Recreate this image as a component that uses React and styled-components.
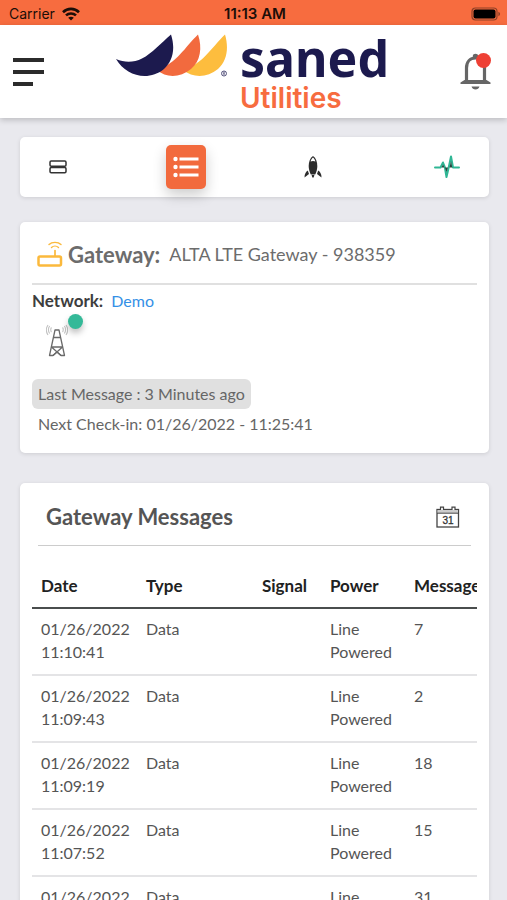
import React from "react";
import styled, { createGlobalStyle } from "styled-components";

const messages = [
  { date: "01/26/2022", time: "11:10:41", type: "Data", power: "Line Powered", count: 7 },
  { date: "01/26/2022", time: "11:09:43", type: "Data", power: "Line Powered", count: 2 },
  { date: "01/26/2022", time: "11:09:19", type: "Data", power: "Line Powered", count: 18 },
  { date: "01/26/2022", time: "11:07:52", type: "Data", power: "Line Powered", count: 15 },
  { date: "01/26/2022", time: "11:06:24", type: "Data", power: "Line Powered", count: 31 },
];

const WifiIcon = () => (
  <svg width="18" height="14" viewBox="0 0 18 14" fill="none" stroke="#1c0e08" strokeWidth="2.6">
    <path d="M1 5.2C5.5 0.8 12.5 0.8 17 5.2" />
    <path d="M4 8.4C6.8 5.8 11.2 5.8 14 8.4" />
    <path d="M9 13.6L6.2 10.8C7.8 9.3 10.2 9.3 11.8 10.8Z" fill="#1c0e08" stroke="none" />
  </svg>
);

const BatteryIcon = () => (
  <svg width="30" height="14" viewBox="0 0 30 14">
    <rect x="1" y="1" width="25" height="12" rx="3.5" fill="none" stroke="#8f4127" strokeWidth="1.2" />
    <rect x="2.5" y="2.5" width="22" height="9" rx="2" fill="#000" />
    <path d="M27.4 4.8C29.6 5.6 29.6 8.4 27.4 9.2Z" fill="#8f4127" />
  </svg>
);

const MenuIcon = () => (
  <svg width="32" height="28" viewBox="0 0 32 28" fill="#2b2b2b">
    <rect x="0" y="0" width="31" height="4" />
    <rect x="0" y="12" width="31" height="4" />
    <rect x="0" y="24" width="20" height="4" />
  </svg>
);

const LogoMark = () => (
  <svg width="112" height="44" viewBox="0 0 112 44">
    <path d="M109 0.500C113 14 111 27 102 35C91 44 77 44 67 36C87 30 95 14 109 0.500Z" fill="#fdbd3e" />
    <path d="M82 0.500C86.500 14 84.500 27 75 35C64 44 50 44 41 36C61 29 69 13 82 0.500Z" fill="#f26a3e" />
    <path d="M55 0.500C60 16 56 28 48 35C32 48 10 42 0 25C9 29 18 28.500 26 24.500C36 19.500 45 9 55 0.500Z" fill="#1c1a4e" />
    <circle cx="108" cy="39.500" r="2.500" fill="none" stroke="#55537c" strokeWidth="1" />
    <path d="M107.300 41V38.200H108.700V39.500H107.300M108.100 39.500L108.900 41" fill="none" stroke="#55537c" strokeWidth="0.600" />
  </svg>
);

const BellIcon = () => (
  <svg width="32" height="38" viewBox="0 0 32 38">
    <path
      d="M6.500 28V15C6.500 9 10 5 15.500 5C21 5 24.500 9 24.500 15V28"
      fill="none"
      stroke="#666"
      strokeWidth="3.200"
    />
    <path d="M12.800 5V3C12.800 0 18.200 0 18.200 3V5Z" fill="#666" />
    <path d="M0.500 31V29.500L4.500 27H26.500L30.500 29.500V31Z" fill="#666" />
    <path d="M11.500 33.500H19.500C18.500 37.500 12.500 37.500 11.500 33.500Z" fill="#666" />
  </svg>
);

const StackIcon = () => (
  <svg width="18" height="14" viewBox="0 0 18 14" fill="none" stroke="#333" strokeWidth="1.500">
    <rect x="1" y="1" width="16" height="5.200" rx="1.200" />
    <rect x="1" y="7.600" width="16" height="5.200" rx="1.200" />
  </svg>
);

const ListIcon = () => (
  <svg width="26" height="22" viewBox="0 0 26 22" fill="#fff">
    <circle cx="2.500" cy="3" r="2.200" />
    <circle cx="2.500" cy="11" r="2.200" />
    <circle cx="2.500" cy="19" r="2.200" />
    <rect x="6.500" y="1.500" width="19" height="3" />
    <rect x="6.500" y="9.500" width="19" height="3" />
    <rect x="6.500" y="17.500" width="19" height="3" />
  </svg>
);

const RocketIcon = () => (
  <svg width="18" height="22" viewBox="0 0 18 22" fill="#2c2c2c">
    <path d="M9 0C12 2 13.300 6 13.300 10C13.300 13 12.500 16 11.200 18.500H6.800C5.500 16 4.700 13 4.700 10C4.700 6 6 2 9 0Z" />
    <path d="M6.600 5.500C7 3.800 7.900 2.500 9 1.600C10.100 2.500 11 3.800 11.400 5.500C10 4.700 8 4.700 6.600 5.500Z" fill="#fff" />
    <path d="M3.800 14.500L5 18L0.500 21.500C0.500 18.500 1.500 16 3.800 14.500Z" />
    <path d="M14.200 14.500L13 18L17.500 21.500C17.500 18.500 16.500 16 14.200 14.500Z" />
    <path d="M7.600 19H10.400L9.700 21.500H8.300Z" />
  </svg>
);

const PulseIcon = () => (
  <svg width="26" height="24" viewBox="0 0 26 24" fill="none" strokeLinejoin="round" strokeLinecap="round">
    <path
      d="M1 12.500H6.500L9 7.500L10.800 12L12.500 22L14.800 12L17 1.500L19 12.500H25"
      stroke="#2fb694"
      strokeWidth="2"
    />
    <path d="M7.500 12.500L9 9.500L10.500 12.500ZM11 12.500L12.500 17L14 12.500ZM15.500 12.500L17 6L18.300 12.500Z" fill="#24443d" />
  </svg>
);

const RouterIcon = () => (
  <svg width="26" height="26" viewBox="0 0 26 26" fill="none" stroke="#fbb93c" strokeLinecap="round">
    <rect x="1.500" y="15.500" width="22.500" height="9" rx="1.500" strokeWidth="2.500" />
    <path d="M18 15V9.500" strokeWidth="1.700" />
    <path d="M12 3.500C15 0.600 21 0.600 24 3.500" strokeWidth="1.400" />
    <path d="M14.500 6.500C16.500 4.600 19.500 4.600 21.500 6.500" strokeWidth="1.400" />
  </svg>
);

const TowerIcon = () => (
  <svg width="22" height="34" viewBox="0 0 22 34" fill="none" stroke="#6a6a6a" strokeWidth="1.300">
    <path d="M9 7H13L18.500 32.500H15L11 29L7 32.500H3.500Z" strokeLinejoin="round" />
    <path d="M7.500 14.500H14.500M5.500 24L15 32.500M16.500 24L7 32.500M6 24H16" />
    <g stroke="#c2c2c2" strokeWidth="1.100">
      <path d="M5.500 4.500C4.500 5.500 4.500 8 5.500 9M3.700 3C2 5 2 8.500 3.700 10.500M2 2C0 5 0 9 2 12" />
      <path d="M16.500 4.500C17.500 5.500 17.500 8 16.500 9M18.300 3C20 5 20 8.500 18.300 10.500M20 2C22 5 22 9 20 12" />
    </g>
  </svg>
);

const CalendarIcon = () => (
  <svg width="24" height="22" viewBox="0 0 24 22">
    <rect x="1" y="3.500" width="21.500" height="17.500" fill="#fff" stroke="#444" strokeWidth="1.300" />
    <rect x="1.600" y="4" width="20.300" height="3" fill="#ccc" />
    <path d="M1 7.200H22.500" stroke="#444" />
    <path d="M4.500 4V1.200H7.500V4M16 4V1.200H19V4" fill="#fff" stroke="#444" strokeWidth="1.200" />
    <text x="12" y="17.500" textAnchor="middle" fontFamily="Liberation Sans, sans-serif" fontSize="10" fill="#333" stroke="#333" strokeWidth="0.300">
      31
    </text>
  </svg>
);

const App = () => {
  return (
    <>
      <GlobalStyle />
      <StatusBar>
        <Carrier>
          Carrier <WifiIcon />
        </Carrier>
        <Clock>11:13 AM</Clock>
        <Battery>
          <BatteryIcon />
        </Battery>
      </StatusBar>

      <Header>
        <IconButton aria-label="Menu">
          <MenuIcon />
        </IconButton>
        <Logo>
          <LogoMark />
          <div>
            <Brand>saned</Brand>
            <SubBrand>Utilities</SubBrand>
          </div>
        </Logo>
        <IconButton aria-label="Notifications">
          <BellIcon />
          <AlertDot />
        </IconButton>
      </Header>

      <Main>
        <TabBar>
          <Tab aria-label="Overview">
            <StackIcon />
          </Tab>
          <Tab aria-label="Messages" $active>
            <ListIcon />
          </Tab>
          <Tab aria-label="Actions">
            <RocketIcon />
          </Tab>
          <Tab aria-label="Activity" $wide>
            <PulseIcon />
          </Tab>
        </TabBar>

        <GatewayCard>
          <GatewayTitle>
            <RouterIcon />
            <h1>Gateway:</h1>
            <span>ALTA LTE Gateway - 938359</span>
          </GatewayTitle>
          <Network>
            <strong>Network:</strong>
            <a href="#demo">Demo</a>
          </Network>
          <Signal>
            <TowerIcon />
            <OnlineDot />
          </Signal>
          <LastMessage>Last Message : 3 Minutes ago</LastMessage>
          <NextCheckIn>Next Check-in: 01/26/2022 - 11:25:41</NextCheckIn>
        </GatewayCard>

        <MessagesCard>
          <MessagesTitle>
            <h2>Gateway Messages</h2>
            <IconButton aria-label="Pick a date">
              <CalendarIcon />
            </IconButton>
          </MessagesTitle>
          <TableScroll>
            <Table>
              <colgroup>
                <Col $width={105} />
                <Col $width={116} />
                <Col $width={68} />
                <Col $width={84} />
                <Col $width={120} />
              </colgroup>
              <thead>
                <tr>
                  <th>Date</th>
                  <th>Type</th>
                  <th>Signal</th>
                  <th>Power</th>
                  <th>Message</th>
                </tr>
              </thead>
              <tbody>
                {messages.map((item) => (
                  <tr key={item.time}>
                    <td>
                      {item.date} {item.time}
                    </td>
                    <td>{item.type}</td>
                    <td></td>
                    <td>{item.power}</td>
                    <td>{item.count}</td>
                  </tr>
                ))}
              </tbody>
            </Table>
          </TableScroll>
        </MessagesCard>
      </Main>
    </>
  );
};

export default App;

const GlobalStyle = createGlobalStyle`
  * {
    box-sizing: border-box;
  }
  html {
    scrollbar-width: none;
  }
  body {
    margin: 0;
    background: #e9e9ee;
    color: #555;
    font-family: Lato, sans-serif;
    font-size: 16px;
    line-height: 23px;
  }
  h1, h2, p {
    margin: 0;
  }
  svg {
    display: block;
    flex: none;
  }
`;

const StatusBar = styled.div`
  display: grid;
  grid-template-columns: 1fr auto 1fr;
  align-items: center;
  height: 25px;
  padding: 2px 6px 0 9px;
  background: #f76c3f;
  color: #1c0e08;
  font-family: Inter, sans-serif;
  font-size: 14px;
`;

const Carrier = styled.div`
  display: flex;
  align-items: center;
  gap: 7px;
`;

const Clock = styled.div`
  font-size: 15px;
  font-weight: 600;
`;

const Battery = styled.div`
  justify-self: end;
`;

const Header = styled.header`
  position: relative;
  display: flex;
  align-items: center;
  justify-content: space-between;
  height: 93px;
  padding: 0 15px 0 13px;
  background: #fff;
  box-shadow: 0 2px 6px rgba(0, 0, 0, 0.2);
`;

const IconButton = styled.button`
  position: relative;
  padding: 0;
  border: 0;
  background: none;
  cursor: pointer;
`;

const AlertDot = styled.span`
  position: absolute;
  top: 0;
  right: 1px;
  width: 15px;
  height: 15px;
  border-radius: 50%;
  background: #ee4035;
`;

const Logo = styled.div`
  display: flex;
  align-items: flex-start;
  gap: 12px;
  height: 76px;
`;

const Brand = styled.div`
  color: #1c1a4e;
  font-family: "Noto Sans", sans-serif;
  font-size: 50px;
  font-weight: 700;
  line-height: 48px;
`;

const SubBrand = styled.div`
  color: #f76c3f;
  font-family: Inter, sans-serif;
  font-size: 28px;
  font-weight: 600;
  line-height: 32px;
`;

const Main = styled.main`
  padding: 19px 18px 30px 20px;
`;

const Card = styled.section`
  border-radius: 5px;
  background: #fff;
  box-shadow: 0 1px 4px rgba(0, 0, 0, 0.12);
`;

const TabBar = styled.nav`
  display: flex;
  align-items: center;
  justify-content: space-between;
  height: 60px;
  margin-bottom: 25px;
  padding: 0 16px 0 18px;
  border-radius: 5px;
  background: #fff;
  box-shadow: 0 1px 4px rgba(0, 0, 0, 0.12);
`;

const Tab = styled.button`
  display: flex;
  align-items: center;
  justify-content: center;
  width: ${({ $wide }) => ($wide ? 52 : 40)}px;
  height: 44px;
  padding: 0;
  border: 0;
  border-radius: 5px;
  background: ${({ $active }) => ($active ? "#f26a3d" : "none")};
  box-shadow: ${({ $active }) => ($active ? "0 6px 14px rgba(0, 0, 0, 0.2)" : "none")};
  cursor: pointer;
`;

const GatewayCard = styled(Card)`
  margin-bottom: 30px;
  padding: 0 12px 18px;
`;

const GatewayTitle = styled.div`
  display: flex;
  align-items: center;
  gap: 5px;
  height: 63px;
  padding: 3px 5px 0;
  border-bottom: 2px solid #e0e0e0;
  color: #6c6c6c;
  font-size: 18px;

  h1 {
    margin-right: 4px;
    font-size: 22px;
    font-weight: 700;
  }
`;

const Network = styled.div`
  display: flex;
  gap: 8px;
  padding-top: 4px;

  strong {
    color: #3d3d3d;
    font-size: 17px;
  }

  a {
    color: #3490e6;
    text-decoration: none;
  }
`;

const Signal = styled.div`
  position: relative;
  width: 51px;
  padding: 11px 0 22px 14px;
`;

const OnlineDot = styled.span`
  position: absolute;
  top: 2px;
  right: 0;
  width: 15px;
  height: 15px;
  border-radius: 50%;
  background: #34b998;
  box-shadow: 0 4px 6px rgba(0, 0, 0, 0.25);
`;

const LastMessage = styled.p`
  width: fit-content;
  padding: 3px 6px 4px;
  border-radius: 6px;
  background: #e0e0e0;
  color: #666;
`;

const NextCheckIn = styled.p`
  padding: 3px 6px 0;
  color: #666;
`;

const MessagesCard = styled(Card)`
  padding: 0 12px 20px;
`;

const MessagesTitle = styled.div`
  display: flex;
  align-items: center;
  justify-content: space-between;
  height: 63px;
  margin: 0 6px 16px;
  padding: 5px 11px 0 8px;
  border-bottom: 1px solid #ccc;

  h2 {
    font-size: 22px;
    font-weight: 700;
  }
`;

const TableScroll = styled.div`
  overflow-x: auto;
  scrollbar-width: none;
`;

const Table = styled.table`
  width: 493px;
  table-layout: fixed;
  border-collapse: collapse;

  th,
  td {
    padding: 8px 9px 11px;
    border-bottom: 2px solid #e4e4e6;
    text-align: left;
    vertical-align: top;
  }

  th {
    padding: 12px 9px 10px;
    border-bottom-color: #4a4d4d;
    color: #1e2222;
    font-size: 17px;
    font-weight: 700;
    white-space: nowrap;
  }
`;

const Col = styled.col`
  width: ${({ $width }) => $width}px;
`;
